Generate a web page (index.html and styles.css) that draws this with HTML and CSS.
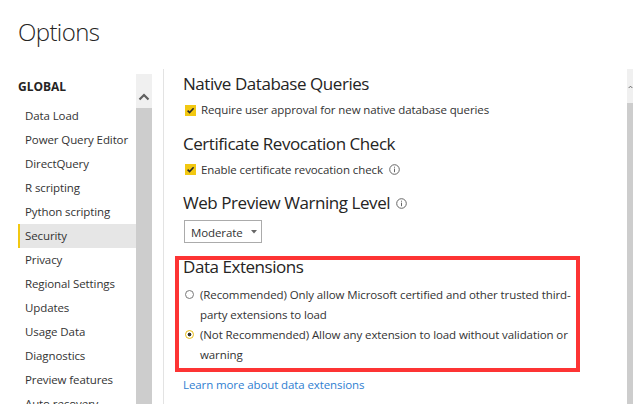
FILE: index.html
```html
<!DOCTYPE html>
<html lang="en">
<head>
<meta charset="utf-8">
<title>Options</title>
<link rel="stylesheet" href="styles.css">
</head>
<body>
<div class="window">
  <header class="title">Options</header>
  <div class="main">
    <aside class="sidebar">
      <nav class="nav">
        <div class="group">GLOBAL</div>
        <ul class="nav-list">
          <li>Data Load</li>
          <li>Power Query Editor</li>
          <li>DirectQuery</li>
          <li>R scripting</li>
          <li>Python scripting</li>
          <li class="active">Security</li>
          <li>Privacy</li>
          <li>Regional Settings</li>
          <li>Updates</li>
          <li>Usage Data</li>
          <li>Diagnostics</li>
          <li>Preview features</li>
          <li>Auto recovery</li>
        </ul>
      </nav>
      <div class="vscroll">
        <div class="vscroll-top">
          <svg width="12" height="8" viewBox="0 0 12 8"><path d="M1.5 6.5 L6 2 L10.5 6.5" fill="none" stroke="#5f5f5f" stroke-width="2.2"/></svg>
        </div>
        <div class="vscroll-thumb"></div>
      </div>
    </aside>

    <section class="content">
      <div class="section">
        <h2 class="heading">Native Database Queries</h2>
        <div class="check-row">
          <span class="checkbox"><svg width="11" height="11" viewBox="0 0 11 11"><path d="M2.6 5.6 L4.6 7.6 L8.6 3.2" fill="none" stroke="#2b2b2b" stroke-width="1.6"/></svg></span>
          <span class="label">Require user approval for new native database queries</span>
        </div>
      </div>

      <div class="section">
        <h2 class="heading">Certificate Revocation Check</h2>
        <div class="check-row">
          <span class="checkbox"><svg width="11" height="11" viewBox="0 0 11 11"><path d="M2.6 5.6 L4.6 7.6 L8.6 3.2" fill="none" stroke="#2b2b2b" stroke-width="1.6"/></svg></span>
          <span class="label">Enable certificate revocation check</span>
          <svg class="info" width="11" height="11" viewBox="0 0 11 11"><circle cx="5.5" cy="5.5" r="4.8" fill="none" stroke="#666" stroke-width="1"/><rect x="5" y="4.6" width="1" height="3.6" fill="#666"/><rect x="5" y="2.7" width="1" height="1" fill="#666"/></svg>
        </div>
      </div>

      <div class="section">
        <h2 class="heading">Web Preview Warning Level
          <svg class="info heading-info" width="11" height="11" viewBox="0 0 11 11"><circle cx="5.5" cy="5.5" r="4.8" fill="none" stroke="#666" stroke-width="1"/><rect x="5" y="4.6" width="1" height="3.6" fill="#666"/><rect x="5" y="2.7" width="1" height="1" fill="#666"/></svg>
        </h2>
        <div class="dropdown">
          <span>Moderate</span>
          <svg width="6" height="4" viewBox="0 0 6 4"><path d="M0 0 H6 L3 3.5 Z" fill="#666"/></svg>
        </div>
      </div>

      <div class="section ext">
        <h2 class="heading">Data Extensions</h2>
        <div class="radios">
          <div class="radio-row">
            <span class="radio"></span>
            <span class="label">(Recommended) Only allow Microsoft certified and other trusted third-<br>party extensions to load</span>
          </div>
          <div class="radio-row">
            <span class="radio checked"></span>
            <span class="label">(Not Recommended) Allow any extension to load without validation or<br>warning</span>
          </div>
        </div>
        <a class="link" href="#">Learn more about data extensions</a>
        <div class="highlight"></div>
      </div>
    </section>

    <div class="vscroll right">
      <div class="vscroll-top">
        <svg width="12" height="8" viewBox="0 0 12 8"><path d="M1.5 6.5 L6 2 L10.5 6.5" fill="none" stroke="#5f5f5f" stroke-width="2.2"/></svg>
      </div>
      <div class="vscroll-thumb"></div>
    </div>
  </div>
</div>
</body>
</html>
```

FILE: styles.css
```css
* { box-sizing: border-box; }

html, body {
  margin: 0;
  padding: 0;
  background: #ffffff;
}

body {
  font-family: "Open Sans", "Noto Sans", sans-serif;
  color: #333333;
  font-size: 11.5px;
  letter-spacing: -0.1px;
}

.window {
  width: 633px;
  height: 404px;
  overflow: hidden;
  display: flex;
  flex-direction: column;
}

.title {
  height: 68px;
  flex: none;
  padding: 17px 0 0 18px;
  font-size: 24px;
  line-height: 30px;
  font-weight: 300;
  letter-spacing: -0.6px;
  color: #252423;
}

.main {
  flex: 1;
  display: flex;
  min-height: 0;
}

/* Sidebar */
.sidebar {
  width: 163px;
  flex: none;
  display: flex;
}

.nav {
  width: 136px;
  padding: 9px 0 0 18px;
}

.group {
  font-size: 12px;
  line-height: 20px;
  font-weight: 700;
  letter-spacing: 0;
  color: #252423;
}

.nav-list {
  list-style: none;
  margin: 7px 0 0;
  padding: 0;
}

.nav-list li {
  height: 24px;
  line-height: 24px;
  padding-left: 7px;
  white-space: nowrap;
  color: #333333;
}

.nav-list li.active {
  background: #e6e6e6;
  border-left: 2px solid #f2c811;
  padding-left: 5px;
}

.vscroll {
  width: 16px;
  margin-top: 6px;
  display: flex;
  flex-direction: column;
}

.vscroll-top {
  height: 34px;
  background: #f0f0f0;
  display: flex;
  align-items: center;
  justify-content: center;
  padding-top: 11px;
}

.vscroll-thumb {
  flex: 1;
  background: #cdcdcd;
}

.vscroll.right {
  width: 6px;
  margin-top: 1px;
  overflow: hidden;
}

.vscroll.right .vscroll-top {
  justify-content: flex-start;
  padding-left: 1px;
  padding-top: 2px;
}

/* Content */
.content {
  flex: 1;
  border-left: 1px solid #e3e3e3;
  margin-top: 1px;
  padding: 3px 0 0 19px;
}

.section + .section {
  margin-top: 11.5px;
}

.section.ext {
  margin-top: 12px;
  position: relative;
}

.heading {
  margin: 0;
  font-size: 17px;
  line-height: 24px;
  font-weight: 400;
  letter-spacing: -0.45px;
  color: #252423;
  white-space: nowrap;
  display: flex;
  align-items: center;
}

.heading-info {
  margin-left: 6px;
  margin-top: 1px;
}

.check-row {
  margin-top: 4px;
  height: 20px;
  display: flex;
  align-items: center;
  white-space: nowrap;
}

.checkbox {
  width: 11px;
  height: 11px;
  background: #f2c811;
  margin-left: 2px;
  margin-right: 5px;
  display: flex;
  flex: none;
}

.label {
  line-height: 20px;
  color: #333333;
}

.info {
  margin-left: 6px;
  flex: none;
}

.dropdown {
  margin-top: 5px;
  margin-left: 1px;
  width: 78px;
  height: 23px;
  border: 1px solid #ababab;
  padding: 1px 0 0 6px;
  line-height: 21px;
  display: flex;
  align-items: center;
  gap: 8px;
  color: #333333;
}

.dropdown span {
  line-height: 21px;
}

.radios {
  margin-top: 6px;
}

.radio-row {
  display: flex;
  align-items: flex-start;
  white-space: nowrap;
}

.radio {
  flex: none;
  width: 9px;
  height: 9px;
  margin: 5px 6px 0 2px;
  border-radius: 50%;
  border: 1.5px solid #7a7a7a;
  background: #ffffff;
}

.radio.checked {
  border: 1.5px solid #e8bd12;
  background: radial-gradient(circle, #333333 0 1.6px, #ffffff 2.2px);
}

.link {
  display: block;
  margin-top: 10px;
  line-height: 20px;
  color: #2f80d1;
  text-decoration: none;
}

.highlight {
  position: absolute;
  left: -8px;
  top: 1px;
  width: 405px;
  height: 116px;
  border: 4px solid #fd3434;
  pointer-events: none;
}
```
